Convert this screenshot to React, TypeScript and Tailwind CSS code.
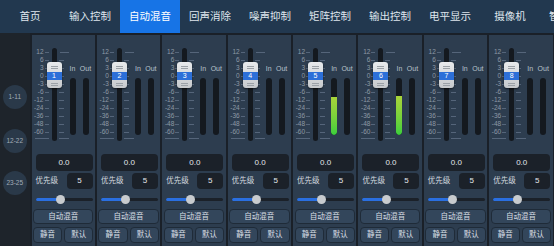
import React from "react";

const tabs = ["首页", "输入控制", "自动混音", "回声消除", "噪声抑制", "矩阵控制", "输出控制", "电平显示", "摄像机", "智能跟踪"];
const scale = ["12", "6", "3", "0", "-3", "-6", "-12", "-24", "-36", "-48", "-60"];
const font = { fontFamily: '"Liberation Sans", "Noto Sans CJK SC", sans-serif' };

function Knob({ n }: { n: number }) {
  return (
    <div className="absolute left-[15px] top-[27px] w-[15px] h-[26px] rounded-[3px] bg-gradient-to-b from-[#e8eaec] to-[#c6c9cc] shadow-[0_1px_2px_rgba(0,0,0,0.6)] flex flex-col items-center overflow-hidden">
      <div className="mt-[4px] w-[7px] h-px bg-[#9aa0a6]" />
      <div className="mt-[1px] w-[7px] h-px bg-[#9aa0a6]" />
      <div className="mt-[3px] w-full h-[8px] bg-[#2c6fd8] text-white text-[7px] leading-[8px] text-center">{n}</div>
      <div className="mt-[3px] w-[7px] h-px bg-[#9aa0a6]" />
      <div className="mt-[1px] w-[7px] h-px bg-[#9aa0a6]" />
    </div>
  );
}

function Strip({ n, level }: { n: number; level: number }) {
  return (
    <div className="w-[63.4px] shrink-0 h-full bg-[#2d3d4f] text-[#c9d1d9]">
      <div className="relative h-[110px] flex">
        {/* scale labels + left ticks */}
        <div className="mt-[13px] flex flex-col">
          {scale.map((s) => (
            <div key={s} className="h-[8px] flex items-center">
              <span className="w-[12px] text-right text-[6.5px] leading-none text-[#8e9aa6]">{s}</span>
              <span className="ml-[1px] w-[4px] h-px bg-[#55657a]" />
            </div>
          ))}
          <div className="h-[4px] flex items-center">
            <span className="ml-[3px] w-[14px] h-px bg-[#55657a]" />
          </div>
        </div>
        {/* track */}
        <div className="ml-[3px] mt-[13px] w-[5px] h-[93px] rounded-full bg-[#14191f]" />
        {/* right ticks */}
        <div className="ml-[2px] mt-[13px] w-[10px] flex flex-col">
          {scale.map((s, i) => (
            <div key={s} className="h-[8px] flex items-center">
              <span className={i === 0 ? "ml-[1px] w-[9px] h-px bg-[#55657a]" : "w-[5px] h-px bg-[#55657a]"} />
            </div>
          ))}
          <div className="h-[4px] flex items-center">
            <span className="w-[10px] h-px bg-[#55657a]" />
          </div>
        </div>
        {/* meters */}
        <div className="ml-[1px] pt-[30px] flex gap-[7px]">
          {["In", "Out"].map((l, i) => (
            <div key={l} className="w-[6px] flex flex-col items-center">
              <span className="h-[8px] text-[7px] leading-[8px] whitespace-nowrap text-[#b7c1cb]">{l}</span>
              <div className="mt-[5px] w-[6px] h-[57px] rounded-full bg-[#14191f] flex flex-col justify-end overflow-hidden">
                {i === 0 && level > 0 && (
                  <div
                    className="w-full rounded-b-full bg-gradient-to-b from-[#a8d43a] to-[#37cf3c]"
                    style={{ height: `${level}px` }}
                  />
                )}
              </div>
            </div>
          ))}
        </div>
        <Knob n={n} />
      </div>
      <div className="ml-[4px] mt-[9px] w-[57px] h-[17px] rounded-[4px] bg-[#1b2129] text-[8px] text-[#e3e7eb] flex items-center justify-center">0.0</div>
      <div className="mt-[2px] ml-[4px] w-[57px] h-[16px] flex items-center justify-between">
        <span className="text-[7.5px] text-[#d3d9df]">优先级</span>
        <div className="w-[26px] h-[16px] rounded-[4px] bg-[#1b2129] text-[8px] text-[#e3e7eb] flex items-center justify-center">5</div>
      </div>
      <div className="relative mt-[6px] ml-[4px] w-[57px] h-[8px] flex items-center">
        <div className="w-full h-[3px] rounded-full bg-[#1b2129] overflow-hidden">
          <div className="w-[24px] h-full bg-[#2a6fe0]" />
        </div>
        <div className="absolute left-[20px] top-[-0.5px] w-[9px] h-[9px] rounded-full bg-[#c8cbce]" />
      </div>
      <div className="mt-[6px] mx-[1.5px] h-[15px] rounded-[4px] bg-[#33465b] border border-[#1f2b38] text-[7.5px] text-[#d9dfe5] flex items-center justify-center">自动混音</div>
      <div className="mt-[3px] mx-[1.5px] flex gap-[2px]">
        <div className="flex-1 h-[16px] rounded-[4px] bg-[#33465b] border border-[#1f2b38] text-[7.5px] text-[#d9dfe5] flex items-center justify-center">静音</div>
        <div className="flex-1 h-[16px] rounded-[4px] bg-[#33465b] border border-[#1f2b38] text-[7.5px] text-[#d9dfe5] flex items-center justify-center">默认</div>
      </div>
    </div>
  );
}

export default function App() {
  const levels = [0, 0, 0, 0, 38, 39, 0, 0];
  return (
    <div className="w-[554px] h-[246px] overflow-hidden bg-[#1a2028] flex flex-col" style={font}>
      <div className="h-[33px] shrink-0 bg-[#22384f] flex">
        {tabs.map((t) => (
          <div
            key={t}
            className={
              t === "自动混音"
                ? "w-[60px] shrink-0 flex items-center justify-center bg-[#1774e6] text-white text-[10.5px]"
                : "w-[60px] shrink-0 flex items-center justify-center text-[#dfe6ed] text-[10.5px]"
            }
          >
            {t}
          </div>
        ))}
      </div>
      <div className="flex-1 flex gap-[2px]">
        <div className="w-[29.5px] shrink-0 bg-[#1e242b] flex flex-col items-center">
          <div className="mt-[52px] w-[24px] h-[24px] rounded-full bg-[#2a3949] text-[6.5px] text-[#a3adb8] flex items-center justify-center">1-11</div>
          <div className="mt-[20px] w-[24px] h-[24px] rounded-full bg-[#2a3949] text-[6.5px] text-[#a3adb8] flex items-center justify-center">12-22</div>
          <div className="mt-[18px] w-[24px] h-[24px] rounded-full bg-[#2a3949] text-[6.5px] text-[#a3adb8] flex items-center justify-center">23-25</div>
        </div>
        <div className="pt-[2px] flex gap-[2px] h-full">
          {levels.map((lv, i) => (
            <Strip key={i} n={i + 1} level={lv} />
          ))}
        </div>
      </div>
    </div>
  );
}
